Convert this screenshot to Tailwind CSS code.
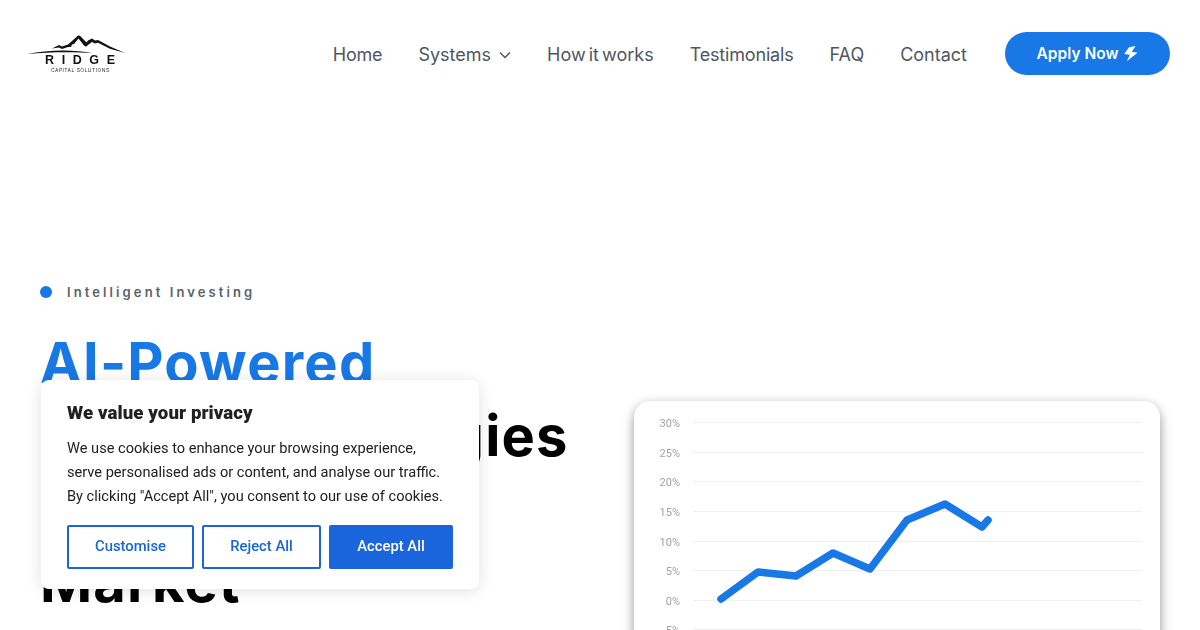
<!DOCTYPE html>
<html lang="en">
<head>
  <meta charset="UTF-8">
  <meta name="viewport" content="width=device-width, initial-scale=1.0">
  <title>Ridge Capital Solutions</title>
  <script src="https://cdn.jsdelivr.net/npm/@tailwindcss/browser@4"></script>
</head>
<body class="bg-white h-[630px] overflow-hidden font-['Inter',sans-serif]">
  <!-- Header -->
  <header class="flex items-center justify-between h-[107px] pl-[26px] pr-[30px]">
    <a href="#" class="block w-[100px] [will-change:transform]">
      <svg viewBox="0 0 100 20" class="w-[100px] h-[20px] block" fill="#111">
        <path d="M26 13.5 L33 10 L36 11.5 L42 9.5 L46 6 L52 0.5 L54 0.8 L60.5 7.5 L62 5.5 L66 3.5 L69 5.5 L72 5 L84 11.5 L99 18 L84 13.8 L72 7.8 L69 8.4 L66 7 L62.5 9.5 L60 11.8 L58 10.5 L52.5 3.5 L48 9 L46 9.5 L45 12 L42 12 L36 14 L33 12.5 Z"/>
        <path d="M1 19.2 C22 14.6 48 14.6 67 18.2 C48 16.8 22 17 1 19.2 Z"/>
      </svg>
      <div class="text-[12.5px] leading-[9px] font-bold tracking-[7.6px] text-[#111] font-['Liberation_Sans',sans-serif] pl-[19px] mt-[1px] whitespace-nowrap">RIDGE</div>
      <div class="text-[5px] leading-[6px] tracking-[0.45px] text-[#333] pl-[25px] mt-[2px] whitespace-nowrap">CAPITAL SOLUTIONS</div>
    </a>
    <nav class="flex items-center gap-9 text-[18px] text-[#4f5660]">
      <a href="#" class="pt-[2px] tracking-[-0.2px]">Home</a>
      <a href="#" class="pt-[2px] flex items-center gap-2">Systems
        <svg class="w-3 h-3" viewBox="0 0 12 12" fill="none" stroke="currentColor" stroke-width="1.4"><path d="M1 3.5 L6 8.5 L11 3.5"/></svg>
      </a>
      <a href="#" class="pt-[2px] [word-spacing:-2px]">How it works</a>
      <a href="#" class="pt-[2px] tracking-[-0.17px]">Testimonials</a>
      <a href="#" class="pt-[2px]">FAQ</a>
      <a href="#" class="pt-[2px]">Contact</a>
      <a href="#" class="flex items-center justify-center gap-[6px] ml-[2px] w-[165px] h-[43px] rounded-full bg-[#1778e6] text-white text-[15.5px] font-semibold">Apply Now
        <svg class="w-[14px] h-[16px]" viewBox="0 0 12 14" fill="currentColor"><path d="M4.3 1 L10 0 L6.7 5 L11.7 6 L2.3 13.3 L5 7.7 L0 7 Z"/></svg>
      </a>
    </nav>
  </header>

  <!-- Hero -->
  <main class="flex justify-between pl-[40px] pr-[40px] pt-[177px]">
    <section class="w-[560px]">
      <div class="flex items-center gap-[15px] h-[16px]">
        <span class="w-3 h-3 rounded-full bg-[#1778e6]"></span>
        <span class="text-[13px] leading-[16px] font-semibold tracking-[3.1px] text-[#5b6169]">Intelligent Investing</span>
      </div>
      <h1 class="mt-[27px] text-[56px] leading-[73px] font-[650] text-black tracking-[1.2px] whitespace-nowrap">
        <span class="block text-[#1778e6]">AI-Powered</span>
        <span class="block [word-spacing:4px]">Trading Strategies</span>
        <span class="block">in Every</span>
        <span class="block">Market</span>
      </h1>
    </section>
    <div class="relative w-[526px] h-[400px] mt-[117px] bg-white rounded-[16px] shadow-[0_6px_12px_rgba(0,0,0,0.35),0_0_8px_rgba(0,0,0,0.1)]">
      <svg class="absolute left-0 top-0 [will-change:transform]" width="526" height="240" viewBox="634 401 526 240" font-family="Roboto, sans-serif" font-size="11" fill="#a3a3a3" text-anchor="end">
        <g stroke="#efefef" stroke-width="1">
          <path d="M693 422.5H1142M693 452.5H1142M693 481.5H1142M693 511.5H1142M693 541.5H1142M693 570.5H1142M693 600.5H1142M693 629.5H1142"/>
        </g>
        <text x="680" y="427">30%</text>
        <text x="680" y="457">25%</text>
        <text x="680" y="486">20%</text>
        <text x="680" y="516">15%</text>
        <text x="680" y="546">10%</text>
        <text x="680" y="575">5%</text>
        <text x="680" y="605">0%</text>
        <text x="680" y="634">-5%</text>
        <polyline points="721,599 758,572 796,576 833,553 870,569 907,520 945,504 982,527 988,520" fill="none" stroke="#1778e6" stroke-width="7.5" stroke-linecap="round" stroke-linejoin="round"/>
      </svg>
    </div>
  </main>

  <!-- Cookie banner -->
  <div class="fixed left-[41px] top-[380px] w-[438px] h-[209px] bg-white rounded-lg p-[26px] pt-[22px] shadow-[0_2px_16px_rgba(0,0,0,0.12)] font-['Roboto',sans-serif]">
    <h2 class="text-[18.6px] leading-[22px] font-black text-[#212121] tracking-[0.1px]">We value your privacy</h2>
    <p class="mt-[12px] w-[380px] text-[14.6px] leading-[24px] text-[#212121]">We use cookies to enhance your browsing experience, serve personalised ads or content, and analyse our traffic. By clicking "Accept All", you consent to our use of cookies.</p>
    <div class="flex gap-2 mt-[17px] text-[14.8px] font-medium">
      <button class="w-[127px] h-[44px] pb-[2px] border-2 border-[#1a64dc] rounded-[2px] text-[#1a64dc]">Customise</button>
      <button class="w-[119px] h-[44px] pb-[2px] border-2 border-[#1a64dc] rounded-[2px] text-[#1a64dc]">Reject All</button>
      <button class="w-[124px] h-[44px] pb-[2px] border-2 border-[#1a64dc] rounded-[2px] bg-[#1a64dc] text-white">Accept All</button>
    </div>
  </div>
</body>
</html>
